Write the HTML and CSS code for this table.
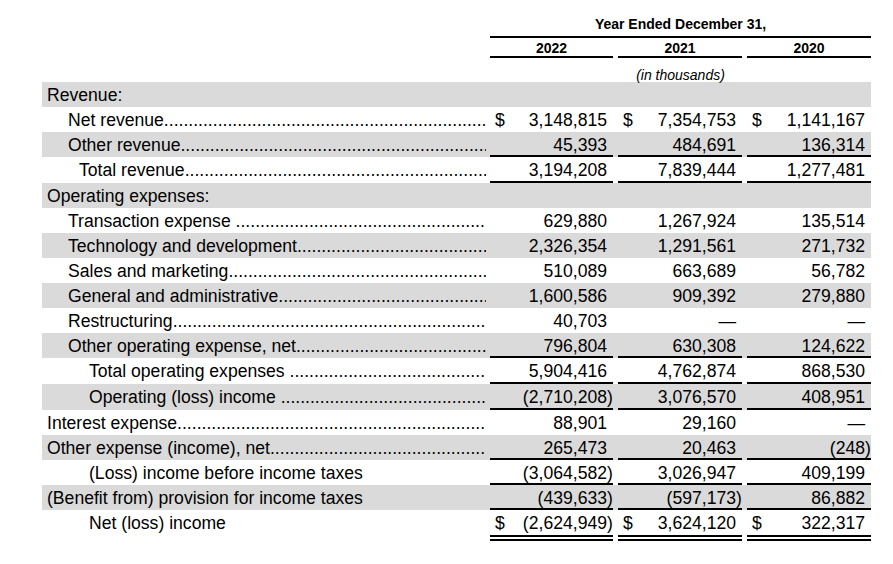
FILE: index.html
```html
<!DOCTYPE html>
<html lang="en">
<head>
<meta charset="utf-8">
<title>Consolidated Statements of Operations</title>
<link rel="stylesheet" href="styles.css">
</head>
<body>
<div class="sheet">
  <div class="hrow top">
    <div class="lab"></div>
    <div class="span3">Year Ended December 31,</div>
  </div>
  <div class="hrow years">
    <div class="lab"></div>
    <div class="yr c1">2022</div>
    <div class="yr c2">2021</div>
    <div class="yr c3">2020</div>
  </div>
  <div class="hrow unit">
    <div class="lab"></div>
    <div class="span3">(in thousands)</div>
  </div>

  <div class="row shade">
    <div class="lab l0"><span class="txt">Revenue:</span></div>
    <div class="num c1"></div><div class="num c2"></div><div class="num c3"></div>
  </div>
  <div class="row">
    <div class="lab l1"><span class="txt">Net revenue</span><span class="lead">....................................................................................................</span></div>
    <div class="num c1"><span class="cur">$</span><span class="v">3,148,815</span></div>
    <div class="num c2"><span class="cur">$</span><span class="v">7,354,753</span></div>
    <div class="num c3"><span class="cur">$</span><span class="v">1,141,167</span></div>
  </div>
  <div class="row shade">
    <div class="lab l1"><span class="txt">Other revenue</span><span class="lead">....................................................................................................</span></div>
    <div class="num c1 ul"><span class="v">45,393</span></div>
    <div class="num c2 ul"><span class="v">484,691</span></div>
    <div class="num c3 ul"><span class="v">136,314</span></div>
  </div>
  <div class="row tall">
    <div class="lab l2"><span class="txt">Total revenue</span><span class="lead">....................................................................................................</span></div>
    <div class="num c1 ul"><span class="v">3,194,208</span></div>
    <div class="num c2 ul"><span class="v">7,839,444</span></div>
    <div class="num c3 ul"><span class="v">1,277,481</span></div>
  </div>
  <div class="row shade">
    <div class="lab l0"><span class="txt">Operating expenses:</span></div>
    <div class="num c1"></div><div class="num c2"></div><div class="num c3"></div>
  </div>
  <div class="row">
    <div class="lab l1"><span class="txt">Transaction expense</span><span class="lead">&nbsp;....................................................................................................</span></div>
    <div class="num c1"><span class="v">629,880</span></div>
    <div class="num c2"><span class="v">1,267,924</span></div>
    <div class="num c3"><span class="v">135,514</span></div>
  </div>
  <div class="row shade">
    <div class="lab l1"><span class="txt">Technology and development</span><span class="lead">....................................................................................................</span></div>
    <div class="num c1"><span class="v">2,326,354</span></div>
    <div class="num c2"><span class="v">1,291,561</span></div>
    <div class="num c3"><span class="v">271,732</span></div>
  </div>
  <div class="row">
    <div class="lab l1"><span class="txt">Sales and marketing</span><span class="lead">....................................................................................................</span></div>
    <div class="num c1"><span class="v">510,089</span></div>
    <div class="num c2"><span class="v">663,689</span></div>
    <div class="num c3"><span class="v">56,782</span></div>
  </div>
  <div class="row shade">
    <div class="lab l1"><span class="txt">General and administrative</span><span class="lead">....................................................................................................</span></div>
    <div class="num c1"><span class="v">1,600,586</span></div>
    <div class="num c2"><span class="v">909,392</span></div>
    <div class="num c3"><span class="v">279,880</span></div>
  </div>
  <div class="row">
    <div class="lab l1"><span class="txt">Restructuring</span><span class="lead">....................................................................................................</span></div>
    <div class="num c1"><span class="v">40,703</span></div>
    <div class="num c2"><span class="v">—</span></div>
    <div class="num c3"><span class="v">—</span></div>
  </div>
  <div class="row shade">
    <div class="lab l1"><span class="txt">Other operating expense, net</span><span class="lead">....................................................................................................</span></div>
    <div class="num c1 ul"><span class="v">796,804</span></div>
    <div class="num c2 ul"><span class="v">630,308</span></div>
    <div class="num c3 ul"><span class="v">124,622</span></div>
  </div>
  <div class="row tall">
    <div class="lab l3"><span class="txt">Total operating expenses</span><span class="lead">&nbsp;....................................................................................................</span></div>
    <div class="num c1 ul"><span class="v">5,904,416</span></div>
    <div class="num c2 ul"><span class="v">4,762,874</span></div>
    <div class="num c3 ul"><span class="v">868,530</span></div>
  </div>
  <div class="row shade tall">
    <div class="lab l3"><span class="txt">Operating (loss) income</span><span class="lead">&nbsp;....................................................................................................</span></div>
    <div class="num c1 ul"><span class="v">(2,710,208<span class="rp">)</span></span></div>
    <div class="num c2 ul"><span class="v">3,076,570</span></div>
    <div class="num c3 ul"><span class="v">408,951</span></div>
  </div>
  <div class="row">
    <div class="lab l0"><span class="txt">Interest expense</span><span class="lead">....................................................................................................</span></div>
    <div class="num c1"><span class="v">88,901</span></div>
    <div class="num c2"><span class="v">29,160</span></div>
    <div class="num c3"><span class="v">—</span></div>
  </div>
  <div class="row shade">
    <div class="lab l0"><span class="txt">Other expense (income), net</span><span class="lead">....................................................................................................</span></div>
    <div class="num c1 ul"><span class="v">265,473</span></div>
    <div class="num c2 ul"><span class="v">20,463</span></div>
    <div class="num c3 ul"><span class="v">(248<span class="rp">)</span></span></div>
  </div>
  <div class="row">
    <div class="lab l3"><span class="txt">(Loss) income before income taxes</span></div>
    <div class="num c1 ul"><span class="v">(3,064,582<span class="rp">)</span></span></div>
    <div class="num c2 ul"><span class="v">3,026,947</span></div>
    <div class="num c3 ul"><span class="v">409,199</span></div>
  </div>
  <div class="row shade">
    <div class="lab l0"><span class="txt">(Benefit from) provision for income taxes</span></div>
    <div class="num c1 ul"><span class="v">(439,633<span class="rp">)</span></span></div>
    <div class="num c2 ul"><span class="v">(597,173<span class="rp">)</span></span></div>
    <div class="num c3 ul"><span class="v">86,882</span></div>
  </div>
  <div class="row last">
    <div class="lab l3"><span class="txt">Net (loss) income</span></div>
    <div class="num c1 dbl"><span class="cur">$</span><span class="v">(2,624,949<span class="rp">)</span></span></div>
    <div class="num c2 dbl"><span class="cur">$</span><span class="v">3,624,120</span></div>
    <div class="num c3 dbl"><span class="cur">$</span><span class="v">322,317</span></div>
  </div>
</div>
</body>
</html>
```

FILE: styles.css
```css
* {
  box-sizing: border-box;
}

html, body {
  margin: 0;
  padding: 0;
  background: #ffffff;
}

body {
  font-family: "Liberation Sans", Arial, sans-serif;
  color: #000000;
}

.sheet {
  padding-left: 42px;
  width: 893px;
}

.hrow,
.row {
  display: flex;
  width: 829px;
}

.lab {
  width: 448px;
  flex: none;
}

.c1 {
  width: 123px;
  flex: none;
}

.c2 {
  width: 124px;
  flex: none;
  margin-left: 5px;
}

.c3 {
  width: 124px;
  flex: none;
  margin-left: 5px;
}

/* ---------- header ---------- */
.hrow {
  font-size: 14px;
  line-height: 16px;
}

.span3 {
  width: 381px;
  flex: none;
  text-align: center;
}

.top .span3 {
  height: 38px;
  padding-top: 16px;
  font-weight: bold;
  border-bottom: 2px solid #000;
}

.years .yr {
  height: 20px;
  padding-top: 2px;
  font-weight: bold;
  text-align: center;
  border-bottom: 2px solid #000;
}

.unit .span3 {
  height: 24px;
  padding-top: 9px;
  font-style: italic;
}

/* ---------- data rows ---------- */
.row {
  height: 25px;
  font-size: 17.6px;
  line-height: 24px;
}

.row.tall {
  height: 26px;
}

.row.shade {
  background: #dadada;
}

.row .lab {
  display: flex;
  padding-top: 1px;
  padding-right: 4px;
  white-space: nowrap;
  overflow: hidden;
}

.l0 { padding-left: 5px; }
.l1 { padding-left: 26px; }
.l2 { padding-left: 37px; }
.l3 { padding-left: 47px; }

.txt {
  flex: none;
}

.lead {
  flex: 1 1 0;
  min-width: 0;
  overflow: hidden;
  white-space: nowrap;
}

.num {
  display: flex;
  height: 100%;
  padding: 1px 6px 0 5px;
  white-space: nowrap;
}

.num.ul {
  border-bottom: 2px solid #000;
}

.row.last {
  height: 31px;
}

.num.dbl {
  border-bottom: 6px double #000;
}

.v {
  margin-left: auto;
}

.rp {
  margin-right: -0.333em;
}
```
